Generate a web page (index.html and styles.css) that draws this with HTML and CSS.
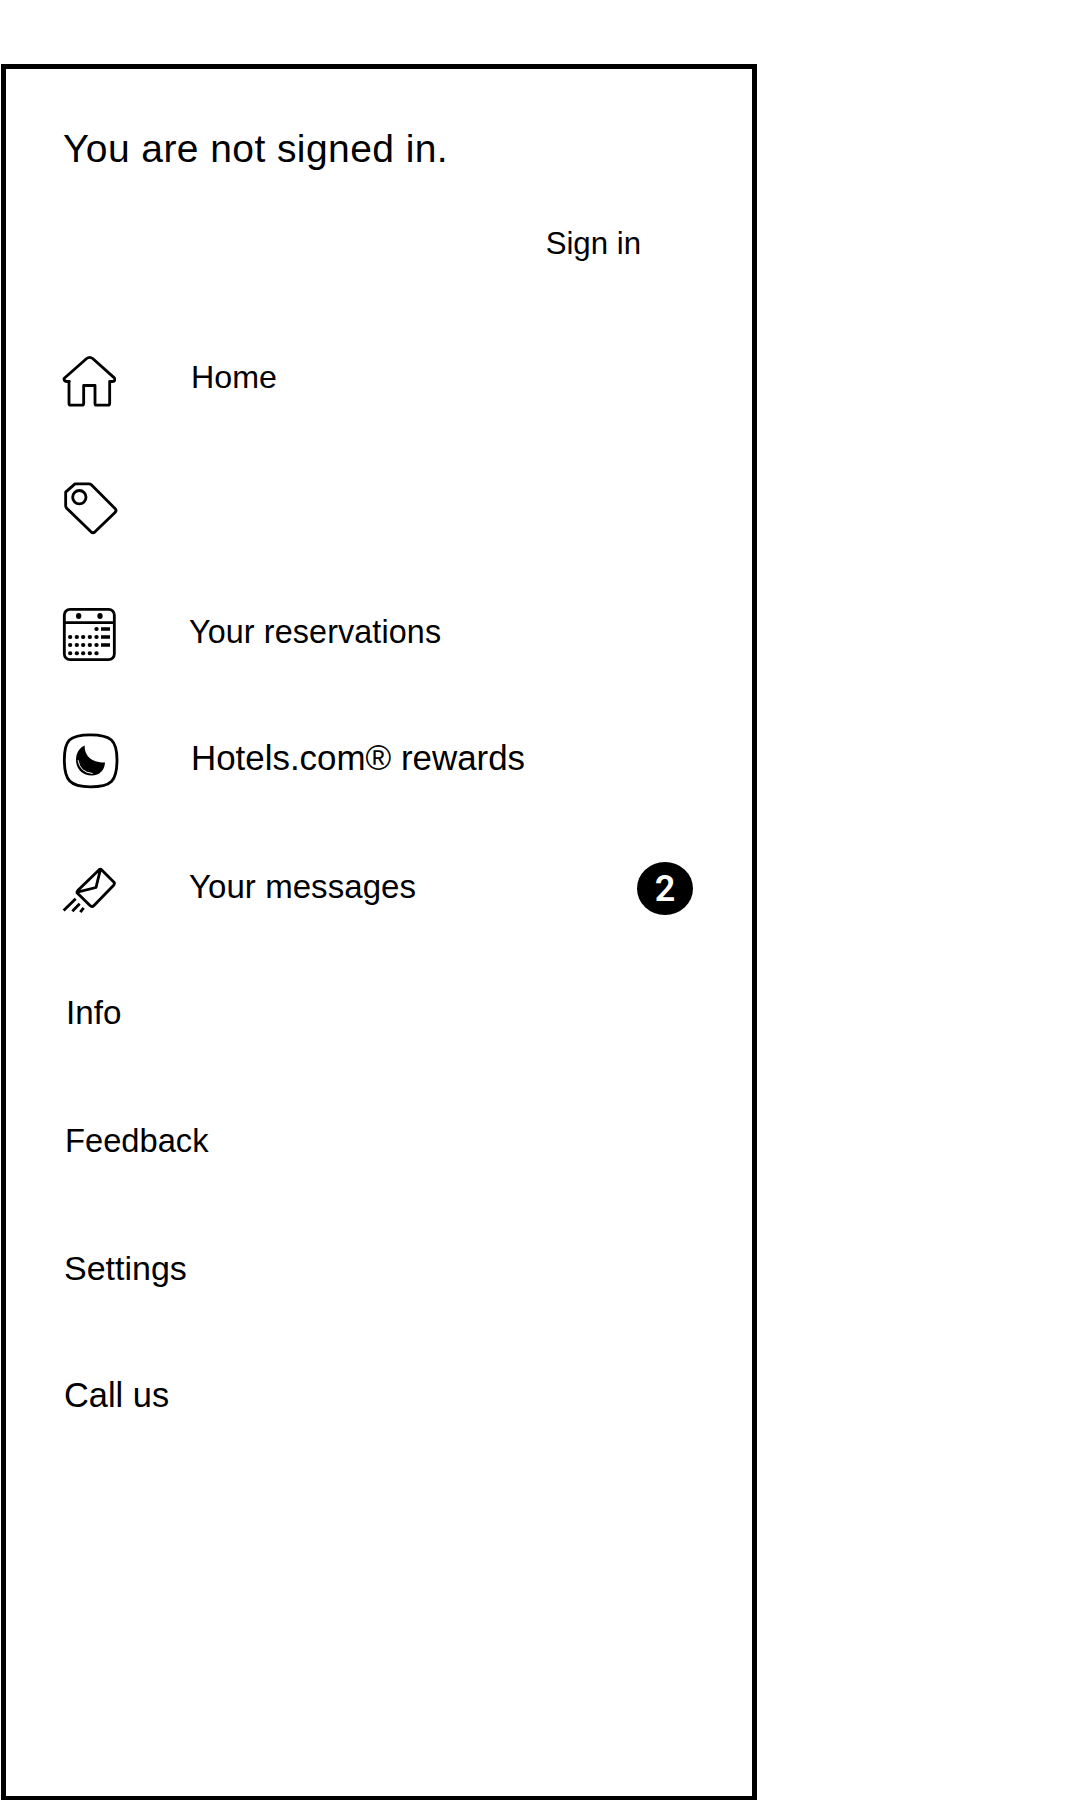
FILE: index.html
```html
<!DOCTYPE html>
<html lang="en">
<head>
<meta charset="utf-8">
<title>Menu</title>
<link rel="stylesheet" href="styles.css">
</head>
<body>
<aside class="panel">
  <header class="account">
    <h1 class="status">You are not signed in.</h1>
    <a class="sign-in">Sign in</a>
  </header>
  <nav class="menu">
    <a class="item home">
      <svg class="icon" viewBox="0 -10.5 240 240"><path d="M58 123H51Q42 123 42 114L110 54Q119 47 128 54L193 112Q197 123 188 123H179V188Q179 194 174 194H139Q135 194 135 189V135H101V189Q101 194 96 194H62Q57 194 57 188V123Z"/></svg>
      <span class="label">Home</span>
    </a>
    <a class="item">
      <svg class="icon" viewBox="0 -19.5 240 240"><path d="M47 65L75 40H117Q121 40 124 43L195 114Q201 120 195 126L135 184Q129 189 123 184L50 113Q47 110 47 106Z"/><circle cx="88" cy="80" r="20"/></svg>
    </a>
    <a class="item reservations">
      <svg class="icon" viewBox="0 -12 240 240"><rect x="43" y="43" width="150" height="151" rx="17"/><path d="M43 83H193"/><g class="solid"><ellipse cx="86" cy="63" rx="8" ry="9"/><ellipse cx="150" cy="63" rx="8" ry="9"/></g><path class="dots" d="M139 102h1M60 126h1M80 126h1M99 126h1M119 126h1M139 126h1M60 150h1M80 150h1M99 150h1M119 150h1M139 150h1M60 175h1M80 175h1M99 175h1M119 175h1M139 175h1"/><path class="dashes" d="M153 102H180M153 126H180M153 150H180"/></svg>
      <span class="label">Your reservations</span>
    </a>
    <a class="item rewards">
      <svg class="icon" viewBox="0 -4.5 240 240"><path d="M43 118C43 60 58 43 121 43C183 43 201 59 201 118C201 181 185 199 121 199C60 199 43 180 43 118Z"/><path class="solid" d="M104 75C103 102 120 126 165 126C164 149 149 165 125 165C97 165 78 145 78 118C78 98 88 81 104 75Z"/><path class="glint" d="M84 119Q90 156 128 159"/></svg>
      <span class="label">Hotels.com® rewards</span>
    </a>
    <a class="item messages">
      <svg class="icon" viewBox="0 -28.5 240 240"><path d="M81 112Q80 108 84 104L146 44Q151 39 156 44L192 80Q195 84 191 89L132 150Q126 156 120 150ZM151 43L138 96L82 110M77 130L41 165M89 145L67 167M101 157L91 170"/></svg>
      <span class="label">Your messages</span>
      <span class="badge">2</span>
    </a>
    <a class="item plain info"><span class="label">Info</span></a>
    <a class="item plain feedback"><span class="label">Feedback</span></a>
    <a class="item plain settings"><span class="label">Settings</span></a>
    <a class="item plain call"><span class="label">Call us</span></a>
  </nav>
</aside>
</body>
</html>
```
FILE: styles.css
```css
* { box-sizing: border-box; }
body {
  display: flex;
  margin: 0;
  background: #fff;
  color: #000;
  font-family: "Liberation Sans", Arial, sans-serif;
}
.panel {
  width: 756px;
  height: 1736px;
  margin: 64px 0 0 1px;
  border: 5px solid #000;
  border-bottom-width: 4px;
}
.account {
  height: 244px;
  padding: 54px 111px 0 57px;
  display: flex;
  flex-direction: column;
}
.status {
  margin: 0;
  font-size: 39px;
  font-weight: 400;
  line-height: 51px;
  letter-spacing: 0.42px;
}
.sign-in {
  align-self: flex-end;
  margin-top: 50px;
  font-size: 31.2px;
  line-height: 40px;
}
.menu {
  display: grid;
  grid-template-rows: 127px 127px 128px 127px 127px 128px 127px 127px 127px;
  padding: 0 59px 0 44px;
}
.item {
  display: grid;
  grid-template-columns: 80px 1fr auto;
  column-gap: 60px;
  align-items: center;
}
.item.plain {
  grid-template-columns: 1fr;
  padding-left: 14px;
}
.label {
  line-height: 40px;
  white-space: nowrap;
}
.home { font-size: 32.2px; column-gap: 61px; }
.reservations { font-size: 32.3px; column-gap: 59px; letter-spacing: 0.12px; }
.rewards { font-size: 34.9px; column-gap: 61px; }
.messages { font-size: 33px; column-gap: 59px; letter-spacing: 0.06px; }
.reservations .label, .messages .label { padding-top: 2px; }
.rewards .label { padding-bottom: 2px; }
.info { font-size: 33.2px; }
.item.info { padding-left: 16px; }
.feedback { font-size: 32.7px; }
.item.feedback { padding-left: 15px; }
.settings { font-size: 34px; }
.call { font-size: 34.4px; }
.icon {
  width: 80px;
  height: 80px;
  fill: none;
  stroke: #000;
  stroke-width: 8.5;
  stroke-linejoin: round;
}
.icon .solid { fill: #000; stroke: none; }
.icon .dots { stroke-width: 12; stroke-linecap: round; }
.icon .dashes { stroke-width: 11; }
.icon .glint { stroke: #fff; stroke-width: 3; }
.badge {
  width: 56px;
  height: 53px;
  margin-top: 6px;
  border-radius: 50%;
  background: #000;
  color: #fff;
  font: 600 36px/54px Roboto, sans-serif;
  text-align: center;
}
```
